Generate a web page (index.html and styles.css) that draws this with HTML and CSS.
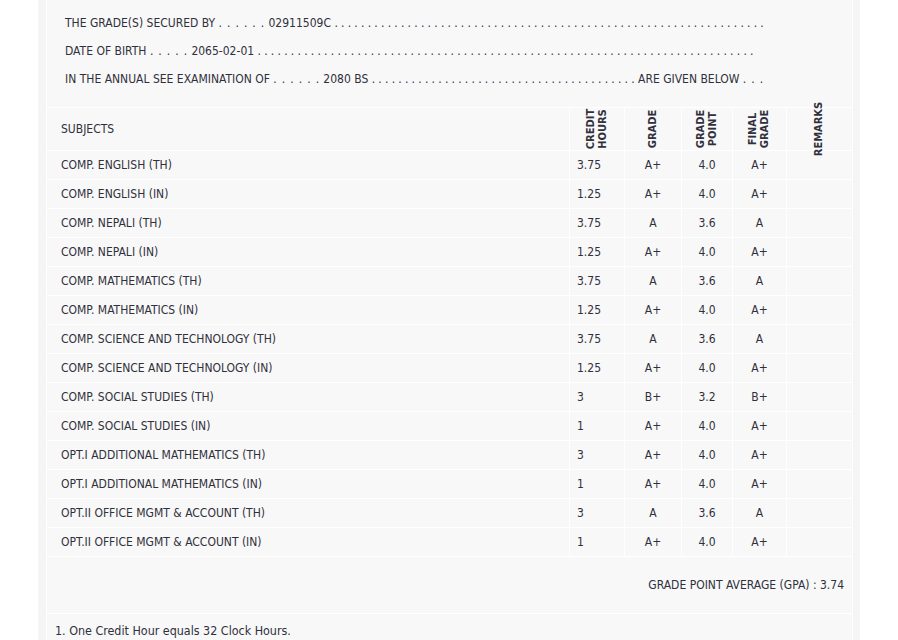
FILE: index.html
```html
<!DOCTYPE html>
<html>
<head>
<meta charset="utf-8">
<link rel="stylesheet" href="styles.css">
</head>
<body>
<div class="panel">
<table class="marks">
<colgroup>
<col class="c-sub"><col class="c-cr"><col class="c-gr"><col class="c-gp"><col class="c-fg"><col class="c-rm">
</colgroup>
<tbody>
<tr>
<td colspan="6" class="info">
<div class="line">THE GRADE(S) SECURED BY <span class="gap">. . . . . .</span> 02911509C <span class="trail">. . . . . . . . . . . . . . . . . . . . . . . . . . . . . . . . . . . . . . . . . . . . . . . . . . . . . . . . . . . . . . . . .</span></div>
<div class="line">DATE OF BIRTH <span class="gap">. . . . .</span> 2065-02-01 <span class="trail">. . . . . . . . . . . . . . . . . . . . . . . . . . . . . . . . . . . . . . . . . . . . . . . . . . . . . . . . . . . . . . . . . . . . . . . . . . .</span></div>
<div class="line">IN THE ANNUAL SEE EXAMINATION OF <span class="gap">. . . . . .</span> 2080 BS <span class="trail">. . . . . . . . . . . . . . . . . . . . . . . . . . . . . . . . . . . . . . . .</span> ARE GIVEN BELOW <span class="gap">. . .</span></div>
</td>
</tr>
<tr class="head">
<td class="sub">SUBJECTS</td>
<td class="vh"><span class="rot">CREDIT<br>HOURS</span></td>
<td class="vh"><span class="rot">GRADE</span></td>
<td class="vh"><span class="rot">GRADE<br>POINT</span></td>
<td class="vh"><span class="rot">FINAL<br>GRADE</span></td>
<td class="vh"><span class="rot">REMARKS</span></td>
</tr>
<tr><td class="sub">COMP. ENGLISH (TH)</td><td class="cr">3.75</td><td class="ctr">A+</td><td class="ctr">4.0</td><td class="ctr">A+</td><td></td></tr>
<tr><td class="sub">COMP. ENGLISH (IN)</td><td class="cr">1.25</td><td class="ctr">A+</td><td class="ctr">4.0</td><td class="ctr">A+</td><td></td></tr>
<tr><td class="sub">COMP. NEPALI (TH)</td><td class="cr">3.75</td><td class="ctr">A</td><td class="ctr">3.6</td><td class="ctr">A</td><td></td></tr>
<tr><td class="sub">COMP. NEPALI (IN)</td><td class="cr">1.25</td><td class="ctr">A+</td><td class="ctr">4.0</td><td class="ctr">A+</td><td></td></tr>
<tr><td class="sub">COMP. MATHEMATICS (TH)</td><td class="cr">3.75</td><td class="ctr">A</td><td class="ctr">3.6</td><td class="ctr">A</td><td></td></tr>
<tr><td class="sub">COMP. MATHEMATICS (IN)</td><td class="cr">1.25</td><td class="ctr">A+</td><td class="ctr">4.0</td><td class="ctr">A+</td><td></td></tr>
<tr><td class="sub">COMP. SCIENCE AND TECHNOLOGY (TH)</td><td class="cr">3.75</td><td class="ctr">A</td><td class="ctr">3.6</td><td class="ctr">A</td><td></td></tr>
<tr><td class="sub">COMP. SCIENCE AND TECHNOLOGY (IN)</td><td class="cr">1.25</td><td class="ctr">A+</td><td class="ctr">4.0</td><td class="ctr">A+</td><td></td></tr>
<tr><td class="sub">COMP. SOCIAL STUDIES (TH)</td><td class="cr">3</td><td class="ctr">B+</td><td class="ctr">3.2</td><td class="ctr">B+</td><td></td></tr>
<tr><td class="sub">COMP. SOCIAL STUDIES (IN)</td><td class="cr">1</td><td class="ctr">A+</td><td class="ctr">4.0</td><td class="ctr">A+</td><td></td></tr>
<tr><td class="sub">OPT.I ADDITIONAL MATHEMATICS (TH)</td><td class="cr">3</td><td class="ctr">A+</td><td class="ctr">4.0</td><td class="ctr">A+</td><td></td></tr>
<tr><td class="sub">OPT.I ADDITIONAL MATHEMATICS (IN)</td><td class="cr">1</td><td class="ctr">A+</td><td class="ctr">4.0</td><td class="ctr">A+</td><td></td></tr>
<tr><td class="sub">OPT.II OFFICE MGMT &amp; ACCOUNT (TH)</td><td class="cr">3</td><td class="ctr">A</td><td class="ctr">3.6</td><td class="ctr">A</td><td></td></tr>
<tr><td class="sub">OPT.II OFFICE MGMT &amp; ACCOUNT (IN)</td><td class="cr">1</td><td class="ctr">A+</td><td class="ctr">4.0</td><td class="ctr">A+</td><td></td></tr>
<tr><td colspan="6" class="gpa">GRADE POINT AVERAGE (GPA) : 3.74</td></tr>
<tr><td colspan="6" class="notes">1. One Credit Hour equals 32 Clock Hours.</td></tr>
</tbody>
</table>
</div>
</body>
</html>
```
FILE: styles.css
```css
html, body {
  margin: 0;
  padding: 0;
  background: #ffffff;
}
body {
  font-family: "DejaVu Sans Condensed", "DejaVu Sans", sans-serif;
  font-size: 12px;
  color: #30303c;
}
.panel {
  margin-left: 38px;
  width: 822px;
  box-sizing: border-box;
  padding: 0 7px 20px 8px;
  background: #f5f5f5;
}
.marks {
  table-layout: fixed;
  width: 807px;
  border-collapse: separate;
  border-spacing: 1px;
  background: #ffffff;
  margin-top: -1px;
}
.marks td {
  background: #f8f8f8;
  padding: 0;
  height: 28px;
  vertical-align: middle;
}
.c-sub { width: 522px; }
.c-cr { width: 54px; }
.c-gr { width: 56px; }
.c-gp { width: 50px; }
.c-fg { width: 53px; }
.c-rm { width: 65px; }
.marks td.info {
  height: auto;
  padding: 9px 18px 14px 18px;
}
.line {
  line-height: 28px;
  white-space: nowrap;
}
.gap {
  letter-spacing: 0.8px;
}
.trail {
  letter-spacing: -0.1px;
}
.marks tr.head td {
  height: 42px;
}
.marks td.sub {
  padding-left: 14px;
}
.marks td.cr {
  padding-left: 7px;
}
.marks td.ctr {
  text-align: center;
}
.marks td.vh {
  text-align: center;
  font-weight: bold;
  font-size: 11px;
  line-height: 12px;
}
.rot {
  display: inline-block;
  transform: rotate(-90deg);
  white-space: nowrap;
}
.marks td.gpa {
  height: 56px;
  text-align: right;
  padding-right: 8px;
}
.marks td.notes {
  height: auto;
  padding: 9px 8px 20px 8px;
  line-height: 16px;
  font-size: 12.4px;
}
```
